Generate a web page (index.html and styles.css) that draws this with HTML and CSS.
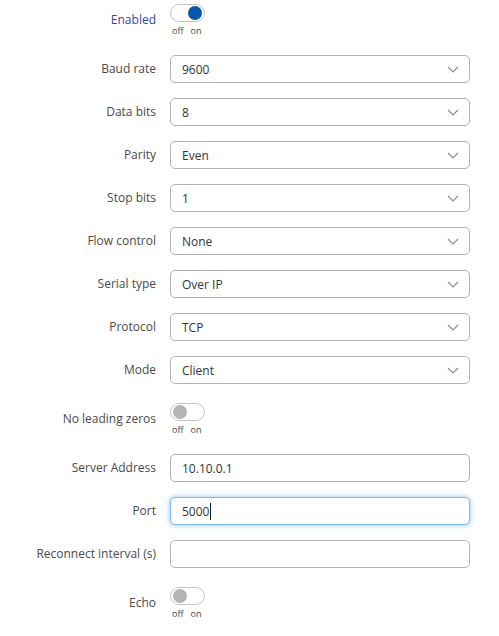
FILE: index.html
```html
<!DOCTYPE html>
<html>
<head>
<meta charset="utf-8">
<link rel="stylesheet" href="styles.css">
</head>
<body>
<form class="form">
  <div class="row row-toggle">
    <label class="lbl lbl-active">Enabled</label>
    <div class="field">
      <span class="switch on"><span class="knob"></span></span>
      <span class="switch-text"><span>off</span><span>on</span></span>
    </div>
  </div>
  <div class="row">
    <label class="lbl">Baud rate</label>
    <div class="field"><div class="select"><span>9600</span><svg class="chev" viewBox="0 0 12 7"><path d="M1 1l5 5 5-5"/></svg></div></div>
  </div>
  <div class="row">
    <label class="lbl">Data bits</label>
    <div class="field"><div class="select"><span>8</span><svg class="chev" viewBox="0 0 12 7"><path d="M1 1l5 5 5-5"/></svg></div></div>
  </div>
  <div class="row">
    <label class="lbl">Parity</label>
    <div class="field"><div class="select"><span>Even</span><svg class="chev" viewBox="0 0 12 7"><path d="M1 1l5 5 5-5"/></svg></div></div>
  </div>
  <div class="row">
    <label class="lbl">Stop bits</label>
    <div class="field"><div class="select"><span>1</span><svg class="chev" viewBox="0 0 12 7"><path d="M1 1l5 5 5-5"/></svg></div></div>
  </div>
  <div class="row">
    <label class="lbl">Flow control</label>
    <div class="field"><div class="select"><span>None</span><svg class="chev" viewBox="0 0 12 7"><path d="M1 1l5 5 5-5"/></svg></div></div>
  </div>
  <div class="row">
    <label class="lbl">Serial type</label>
    <div class="field"><div class="select"><span>Over IP</span><svg class="chev" viewBox="0 0 12 7"><path d="M1 1l5 5 5-5"/></svg></div></div>
  </div>
  <div class="row">
    <label class="lbl">Protocol</label>
    <div class="field"><div class="select"><span>TCP</span><svg class="chev" viewBox="0 0 12 7"><path d="M1 1l5 5 5-5"/></svg></div></div>
  </div>
  <div class="row">
    <label class="lbl">Mode</label>
    <div class="field"><div class="select"><span>Client</span><svg class="chev" viewBox="0 0 12 7"><path d="M1 1l5 5 5-5"/></svg></div></div>
  </div>
  <div class="row row-toggle">
    <label class="lbl">No leading zeros</label>
    <div class="field">
      <span class="switch"><span class="knob"></span></span>
      <span class="switch-text"><span>off</span><span>on</span></span>
    </div>
  </div>
  <div class="row">
    <label class="lbl">Server Address</label>
    <div class="field"><div class="input">10.10.0.1</div></div>
  </div>
  <div class="row">
    <label class="lbl">Port</label>
    <div class="field"><div class="input focused">5000<span class="caret"></span></div></div>
  </div>
  <div class="row">
    <label class="lbl">Reconnect interval (s)</label>
    <div class="field"><div class="input"></div></div>
  </div>
  <div class="row row-toggle">
    <label class="lbl">Echo</label>
    <div class="field">
      <span class="switch"><span class="knob"></span></span>
      <span class="switch-text"><span>off</span><span>on</span></span>
    </div>
  </div>
</form>
</body>
</html>
```
FILE: styles.css
```css
* { box-sizing: border-box; }
html, body { margin: 0; padding: 0; background: #fff; }
body {
  font-family: "Open Sans", "Liberation Sans", sans-serif;
  font-size: 12px;
  color: #333;
  width: 499px;
}
.form {
  display: flex;
  flex-direction: column;
  gap: 15px;
  padding-right: 29px;
}
.row {
  display: flex;
  align-items: center;
  min-height: 28px;
}
.row-toggle { height: 40px; }
.lbl {
  width: 157px;
  flex: none;
  text-align: right;
  color: #4a4a4a;
  line-height: 16px;
  padding-right: 1px;
}
.lbl-active { color: #3545a8; }
.field {
  flex: 1;
  margin-left: 13px;
}
.row-toggle .field {
  align-self: flex-start;
  padding-top: 4px;
  display: flex;
  flex-direction: column;
}
.switch {
  position: relative;
  display: block;
  width: 35px;
  height: 18px;
  border: 1px solid #c4c4c4;
  border-radius: 9px;
  background: #fff;
}
.knob {
  position: absolute;
  top: 1px;
  left: 2px;
  width: 14px;
  height: 14px;
  border-radius: 50%;
  background: #b4b4b4;
}
.switch.on .knob {
  left: auto;
  right: 2px;
  background: #0a56a8;
}
.switch-text {
  display: flex;
  gap: 7px;
  font-size: 9px;
  line-height: 14px;
  margin-top: 2px;
  padding-left: 2px;
  color: #444;
}
.select, .input {
  position: relative;
  height: 28px;
  border: 1px solid #b3b3b3;
  border-radius: 5px;
  padding: 0 11px;
  display: flex;
  align-items: center;
  background: #fff;
  color: #333;
}
.select span { flex: 1; }
.chev {
  width: 12px;
  height: 7px;
  margin-right: -1px;
  fill: none;
  stroke: #8c8c8c;
  stroke-width: 1.2;
}
.input.focused {
  border-color: #7fb8ee;
  box-shadow: 0 0 4px 1px rgba(102, 175, 233, 0.55);
}
.caret {
  display: inline-block;
  width: 1px;
  height: 17px;
  background: #222;
  margin-left: 1px;
}
```
